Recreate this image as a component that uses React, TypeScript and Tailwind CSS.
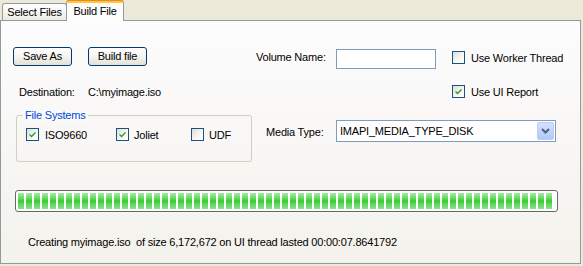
import React from "react";

function Check({ checked }: { checked: boolean }) {
  return (
    <span className="relative inline-flex w-[13px] h-[13px] shrink-0 border border-[#1c5180] bg-gradient-to-br from-[#dcdcd7] via-[#f4f4f1] to-white">
      {checked && (
        <svg width="11" height="11" viewBox="0 0 11 11" className="absolute left-0 top-0">
          <path d="M2.5 4.5 L4.5 6.5 L8.5 2.5 L8.5 4.5 L4.5 8.5 L2.5 6.5 Z" fill="#21a121" />
        </svg>
      )}
    </span>
  );
}

function Btn({ label }: { label: string }) {
  return (
    <div className="w-[59px] h-[19px] flex items-center justify-center rounded-[3px] border border-[#003c74] bg-gradient-to-b from-white via-[#f5f4ef] to-[#e3e1d7] text-black">
      {label}
    </div>
  );
}

export default function App() {
  const blocks = Array.from({ length: 67 });
  return (
    <div
      className="w-[583px] h-[266px] bg-[#ece9d8] text-[11px] tracking-[-0.2px] text-black leading-none overflow-hidden whitespace-nowrap"
      style={{ fontFamily: '"Liberation Sans", Arial, sans-serif' }}
    >
      {/* tab strip */}
      <div className="h-[20px] flex items-end pl-[2px] relative z-10">
        <div className="w-[65px] h-[17px] border border-b-0 border-[#919b9c] rounded-t-[3px] bg-gradient-to-b from-white to-[#ecebe6] flex items-center justify-center">
          Select Files
        </div>
        <div className="w-[58px] h-[21px] -mb-[1px] -ml-[1px] border-x border-[#919b9c] rounded-t-[3px] bg-[#fdfdfe] flex flex-col">
          <div className="h-[3px] rounded-t-[3px] bg-[#ffc83c] border-t border-[#e68b2c] -mx-[1px]" />
          <div className="flex-1 flex items-center justify-center pb-[1px]">Build File</div>
        </div>
      </div>
      {/* panel */}
      <div className="w-[581px] h-[244px] border border-[#919b9c] bg-gradient-to-b from-[#fdfcfe] to-[#f4f2ec] flex flex-col">
        {/* row A */}
        <div className="flex mt-[26px] h-[20px]">
          <div className="w-[255px] flex items-start gap-[16px] pl-[12px]">
            <Btn label="Save As" />
            <Btn label="Build file" />
          </div>
          <div className="w-[80px] flex items-center pt-[1px]">Volume Name:</div>
          <div className="w-[100px] h-[20px] mt-[2px] border border-[#7f9db9] bg-white" />
          <div className="flex items-center gap-[6px] ml-[16px] h-[13px] mt-[4px]">
            <Check checked={false} />
            <span className="pt-[1px]">Use Worker Thread</span>
          </div>
        </div>
        {/* row B */}
        <div className="flex mt-[18px] h-[13px] items-center">
          <div className="w-[87px] pl-[18px] pt-[1px]">Destination:</div>
          <div className="w-[364px] pt-[1px]">C:\myimage.iso</div>
          <div className="flex items-center gap-[6px]">
            <Check checked={true} />
            <span className="pt-[1px]">Use UI Report</span>
          </div>
        </div>
        {/* row C */}
        <div className="flex mt-[17px]">
          <div className="ml-[15px] w-[236px] h-[47px] border border-[#d0d0bf] rounded-[3px] relative">
            <span className="absolute -top-[6px] left-[6px] px-[2px] bg-[#fbfafb] text-[#0046d5]">File Systems</span>
            <div className="flex items-center mt-[12px] ml-[9px]">
              <div className="w-[90px] flex items-center gap-[6px]">
                <Check checked={true} />
                <span className="pt-[1px]">ISO9660</span>
              </div>
              <div className="w-[75px] flex items-center gap-[5px]">
                <Check checked={true} />
                <span className="pt-[1px]">Joliet</span>
              </div>
              <div className="flex items-center gap-[5px]">
                <Check checked={false} />
                <span className="pt-[1px]">UDF</span>
              </div>
            </div>
          </div>
          <div className="flex items-start mt-[5px]">
            <div className="w-[84px] pl-[14px] mt-[7px]">Media Type:</div>
            <div className="w-[220px] h-[22px] border border-[#7f9db9] bg-white flex items-center pl-[3px] justify-between">
              <span className="pt-[1px]">IMAPI_MEDIA_TYPE_DISK</span>
              <div className="w-[17px] h-[18px] mr-[1px] rounded-[2px] border border-[#b9cdf7] bg-gradient-to-b from-[#d4e0fd] to-[#b4c9f8] flex items-center justify-center">
                <svg width="9" height="6" viewBox="0 0 9 6">
                  <path d="M1 1 L4.5 4.5 L8 1" stroke="#4d6185" strokeWidth="2" fill="none" />
                </svg>
              </div>
            </div>
          </div>
        </div>
        {/* progress */}
        <div className="ml-[14px] mt-[28px] w-[543px] h-[22px] border border-[#686868] rounded-[3px] bg-white p-[2px] flex gap-[2px] overflow-hidden">
          {blocks.map((_, i) => (
            <div
              key={i}
              className="w-[6px] h-full shrink-0 bg-gradient-to-b from-[#a8e8a8] via-[#2ad02a] to-[#8ce08c]"
            />
          ))}
        </div>
        {/* status */}
        <div className="ml-[27px] mt-[25px]">
          Creating myimage.iso&nbsp; of size 6,172,672 on UI thread lasted 00:00:07.8641792
        </div>
      </div>
    </div>
  );
}
